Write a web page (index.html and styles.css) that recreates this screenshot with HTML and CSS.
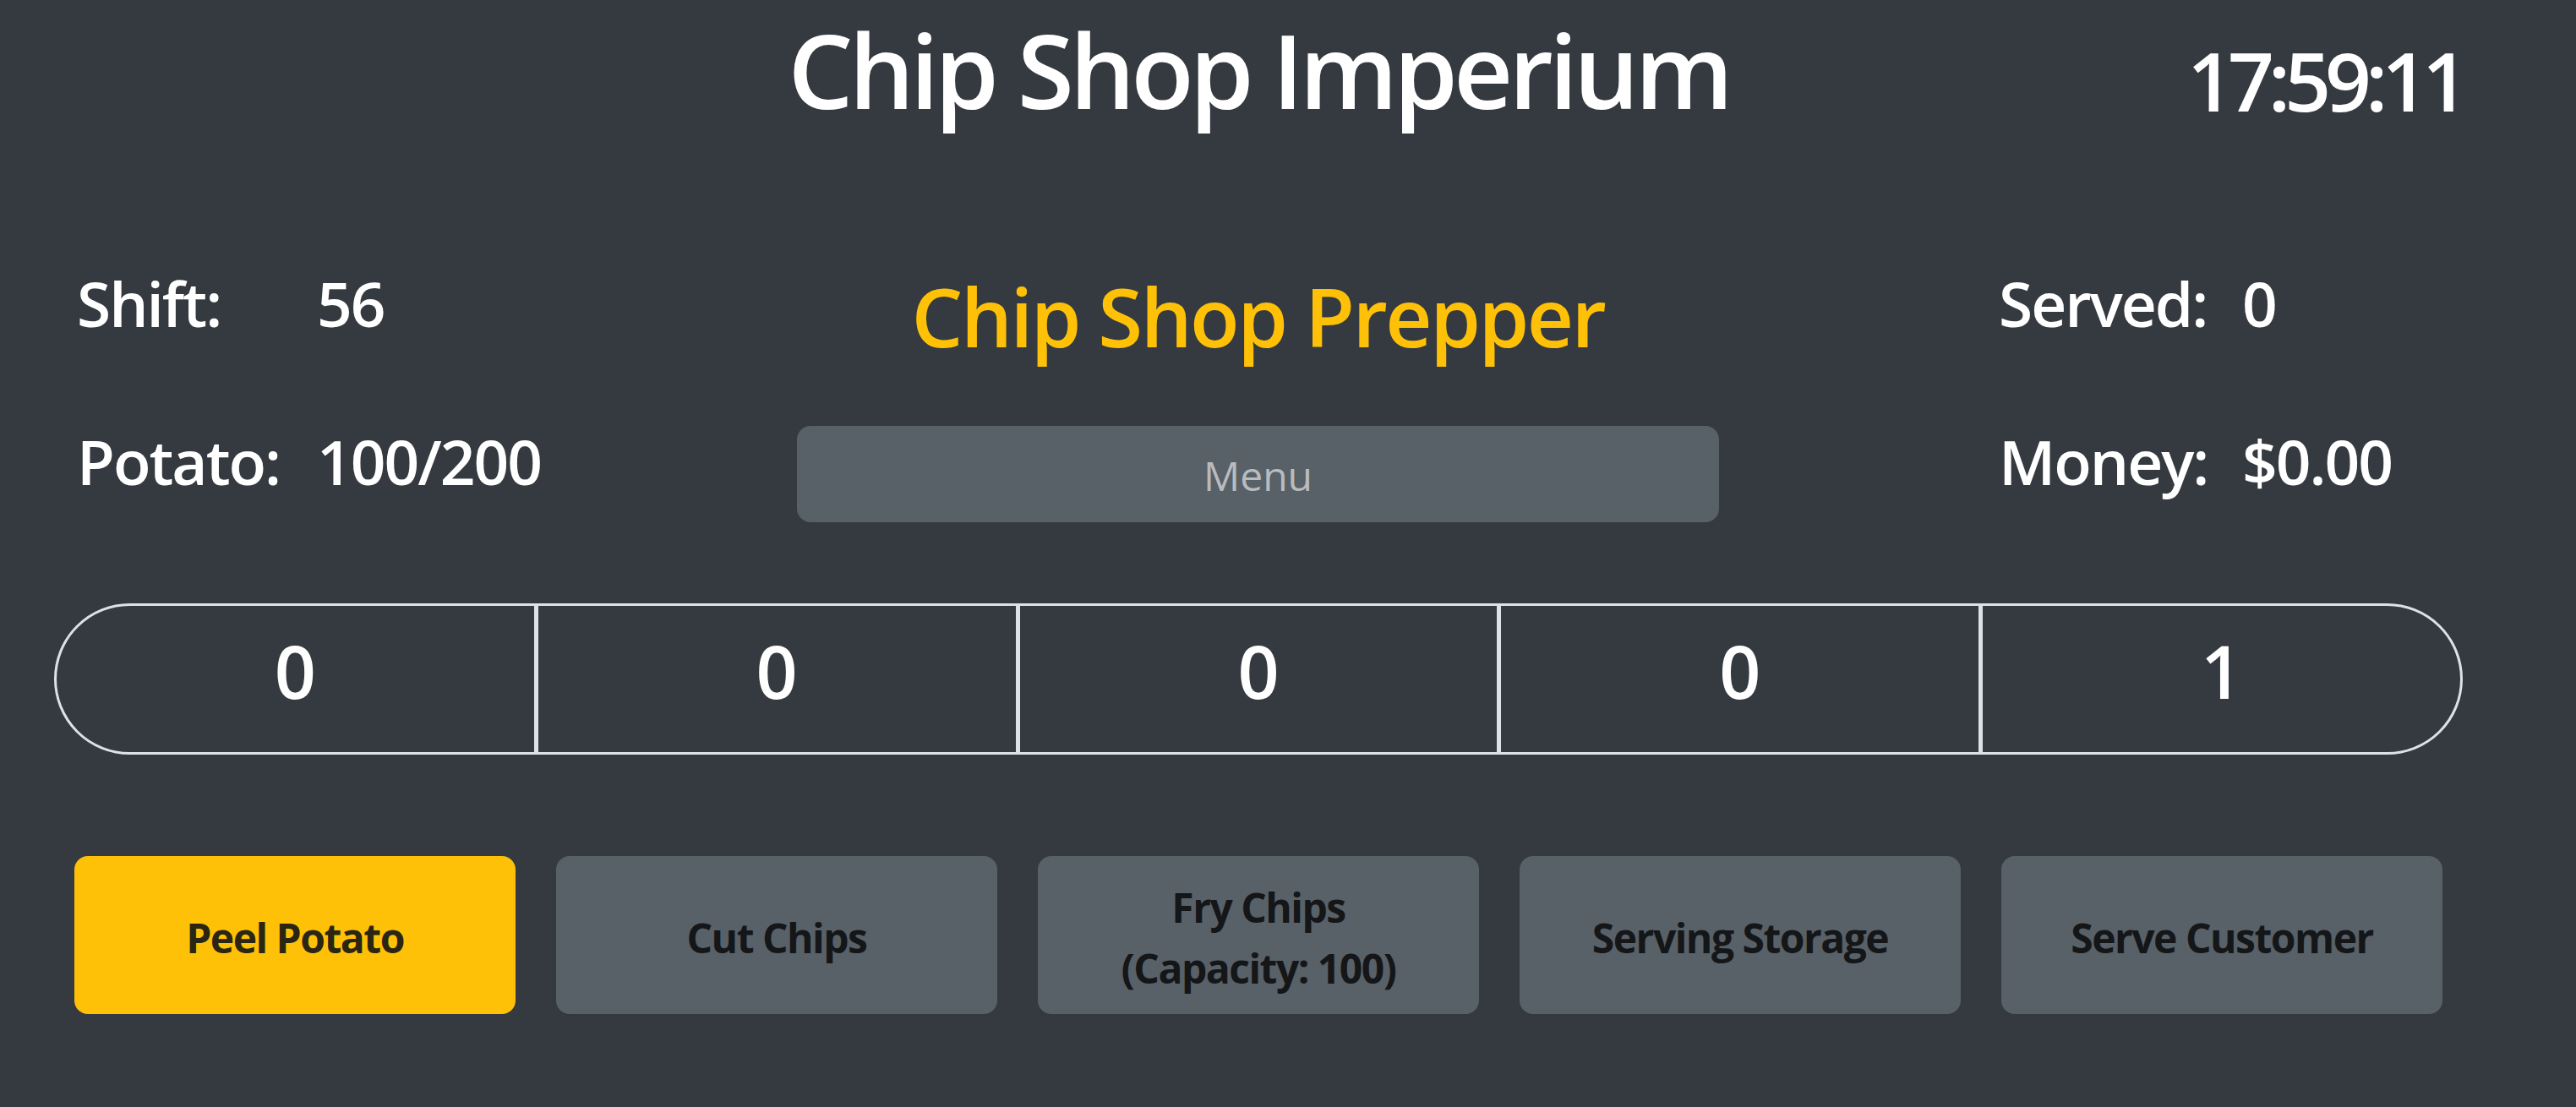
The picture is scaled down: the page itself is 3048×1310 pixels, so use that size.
FILE: index.html
```html
<!DOCTYPE html>
<html lang="en">
<head>
<meta charset="utf-8">
<title>Chip Shop Imperium</title>
<link rel="stylesheet" href="styles.css">
</head>
<body>
<div class="page">
  <header class="top">
    <div class="spacer"></div>
    <h1 class="title">Chip Shop Imperium</h1>
    <div class="clock">17:59:11</div>
  </header>

  <section class="status">
    <div class="stats stats-left">
      <div class="stat"><span class="label">Shift:</span><span class="val">56</span></div>
      <div class="stat"><span class="label">Potato:</span><span class="val">100/200</span></div>
    </div>
    <div class="center">
      <h2 class="role">Chip Shop Prepper</h2>
      <button class="btn btn-menu" disabled>Menu</button>
    </div>
    <div class="stats stats-right">
      <div class="stat"><span class="label">Served:</span><span class="val">0</span></div>
      <div class="stat"><span class="label">Money:</span><span class="val">$0.00</span></div>
    </div>
  </section>

  <div class="counters">
    <div class="cell">0</div>
    <div class="cell">0</div>
    <div class="cell">0</div>
    <div class="cell">0</div>
    <div class="cell">1</div>
  </div>

  <div class="actions">
    <button class="btn btn-action btn-warning">Peel Potato</button>
    <button class="btn btn-action btn-disabled" disabled>Cut Chips</button>
    <button class="btn btn-action btn-disabled" disabled>Fry Chips<br>(Capacity: 100)</button>
    <button class="btn btn-action btn-disabled" disabled>Serving Storage</button>
    <button class="btn btn-action btn-disabled" disabled>Serve Customer</button>
  </div>
</div>
</body>
</html>
```

FILE: styles.css
```css
html, body {
  margin: 0;
  padding: 0;
  background: #343a40;
  color: #ffffff;
  font-family: "Open Sans", "Noto Sans", sans-serif;
}

.page {
  width: 2850px;
  margin-left: 64px;
}

/* header */
.top {
  display: grid;
  grid-template-columns: 1fr auto 1fr;
}

.title {
  margin: 9px 0 0;
  font-size: 122px;
  font-weight: 600;
  line-height: 1.2;
  letter-spacing: -5px;
  white-space: nowrap;
}

.clock {
  justify-self: end;
  align-self: start;
  margin: 37px 0 0 0;
  font-size: 96px;
  font-weight: 600;
  line-height: 1.2;
  letter-spacing: -7px;
}

/* status row */
.status {
  display: grid;
  grid-template-columns: 879px 1091px 880px;
  margin-top: 160px;
}

.stats {
  display: flex;
  flex-direction: column;
  gap: 99px;
}

.stats-left {
  padding-left: 27px;
}

.stats-right {
  padding-left: 331px;
}

.stat {
  display: flex;
  font-size: 73px;
  font-weight: 600;
  line-height: 1.2;
  letter-spacing: -2px;
  white-space: nowrap;
}

.label {
  width: 284px;
  flex: none;
}

.stats-right .label {
  width: 288px;
}

.center {
  display: flex;
  flex-direction: column;
  align-items: stretch;
}

.role {
  margin: 1px 0 0;
  text-align: center;
  font-size: 96px;
  font-weight: 600;
  line-height: 1.2;
  letter-spacing: -2.5px;
  color: #ffc107;
  white-space: nowrap;
}

.btn {
  font-family: inherit;
  border: 1px solid transparent;
  border-radius: 16px;
  padding: 24px 24px 16px;
  font-size: 48px;
  line-height: 1.5;
  text-align: center;
}

.btn-menu {
  margin-top: 72px;
  height: 114px;
  padding: 4px 24px 0;
  background: #586068;
  color: #b9bbbd;
  font-weight: 400;
}

/* counter bar */
.counters {
  display: flex;
  margin-top: 96px;
  border: 3px solid #dee2e6;
  border-radius: 90px;
  overflow: hidden;
}

.cell {
  flex: 1;
  text-align: center;
  font-size: 86px;
  font-weight: 600;
  line-height: 129px;
  padding: 12px 0 32px;
}

.cell + .cell {
  border-left: 5px solid #dee2e6;
}

/* action buttons */
.actions {
  display: flex;
  gap: 48px;
  padding: 0 24px;
  margin-top: 120px;
}

.btn-action {
  flex: 1;
  min-height: 187px;
  font-weight: 700;
  letter-spacing: -1.5px;
}

.btn-warning {
  background: #ffc107;
  color: #2a2613;
}

.btn-disabled {
  background: #586068;
  color: #141618;
}
```
